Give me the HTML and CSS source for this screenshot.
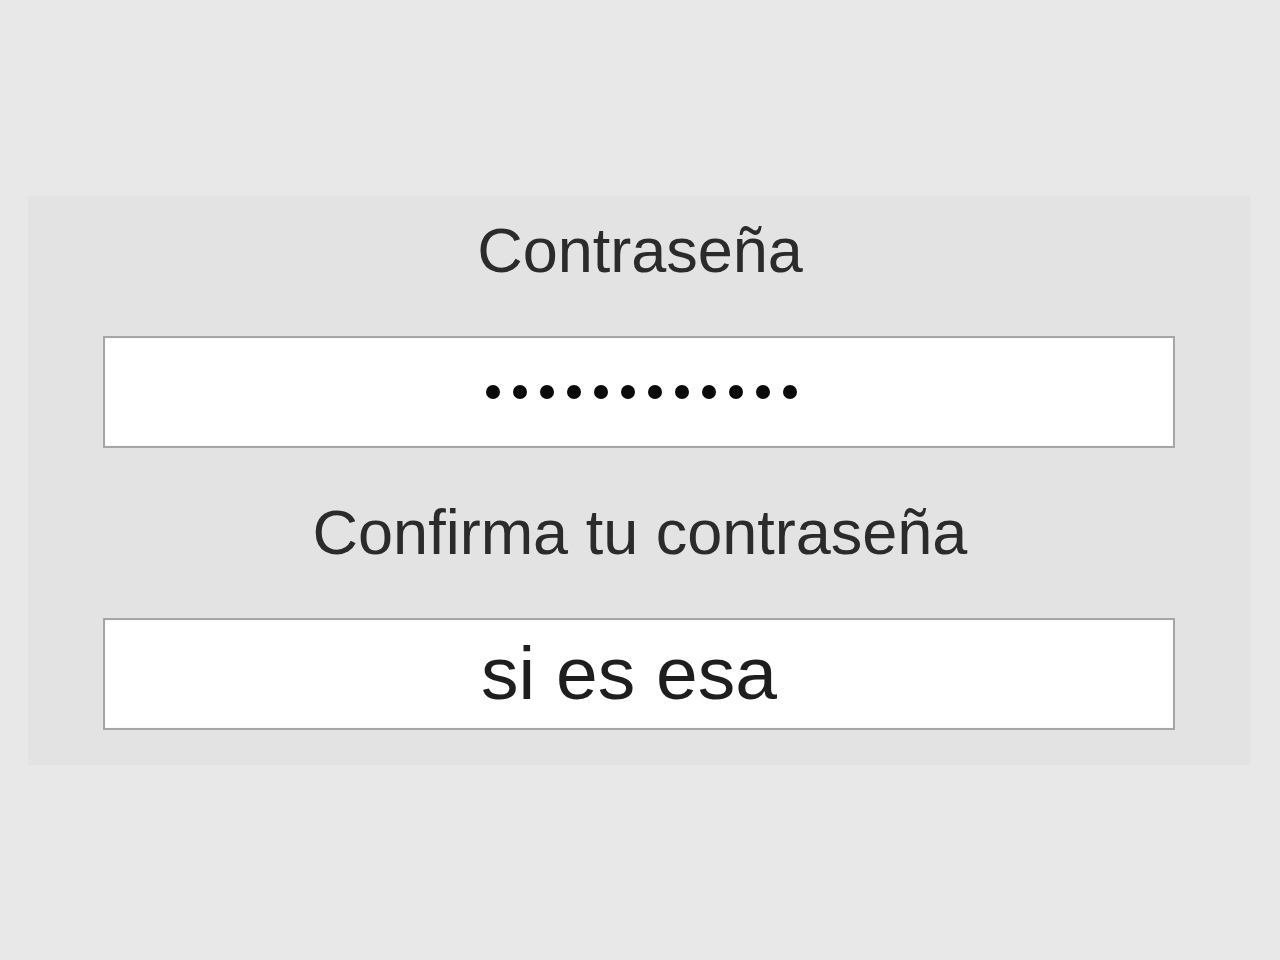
FILE: index.html
```html
<!DOCTYPE html>
<html lang="es">
<head>
<meta charset="utf-8">
<title>Contraseña</title>
<link rel="stylesheet" href="styles.css">
</head>
<body>
<main class="page">
  <section class="panel">
    <div class="label">Contraseña</div>
    <div class="field field-password" aria-label="Contraseña">
      <span class="dot"></span><span class="dot"></span><span class="dot"></span><span class="dot"></span>
      <span class="dot"></span><span class="dot"></span><span class="dot"></span><span class="dot"></span>
      <span class="dot"></span><span class="dot"></span><span class="dot"></span><span class="dot"></span>
    </div>
    <div class="label label-second">Confirma tu contraseña</div>
    <div class="field field-text">si es esa</div>
  </section>
</main>
</body>
</html>
```

FILE: styles.css
```css
html, body {
  margin: 0;
  padding: 0;
  background: #e8e8e8;
}

body {
  font-family: "Liberation Sans", Arial, sans-serif;
  width: 1280px;
  height: 960px;
  overflow: hidden;
}

.page {
  padding: 196px 29px 0 28px;
}

.panel {
  background: #e3e3e3;
  padding: 23px 76px 35px 75px;
  display: flex;
  flex-direction: column;
}

.label {
  font-size: 63px;
  line-height: 63px;
  color: #2b2b2b;
  text-align: center;
  margin-bottom: 54px;
  padding-left: 2px;
}

.label-second {
  margin-bottom: 54px;
}

.field {
  box-sizing: border-box;
  height: 112px;
  background: #ffffff;
  border: 2px solid #a6a6a6;
  box-shadow: inset 0 0 1px #c8c8c8;
  display: flex;
  align-items: center;
  justify-content: center;
}

.field-password {
  gap: 13px;
  padding-left: 4px;
  margin-bottom: 53px;
}

.dot {
  width: 14px;
  height: 14px;
  border-radius: 50%;
  background: #0a0a0a;
}

.field-text {
  font-size: 75px;
  line-height: 75px;
  color: #1e1e1e;
  padding-right: 20px;
  padding-bottom: 2px;
}
```
